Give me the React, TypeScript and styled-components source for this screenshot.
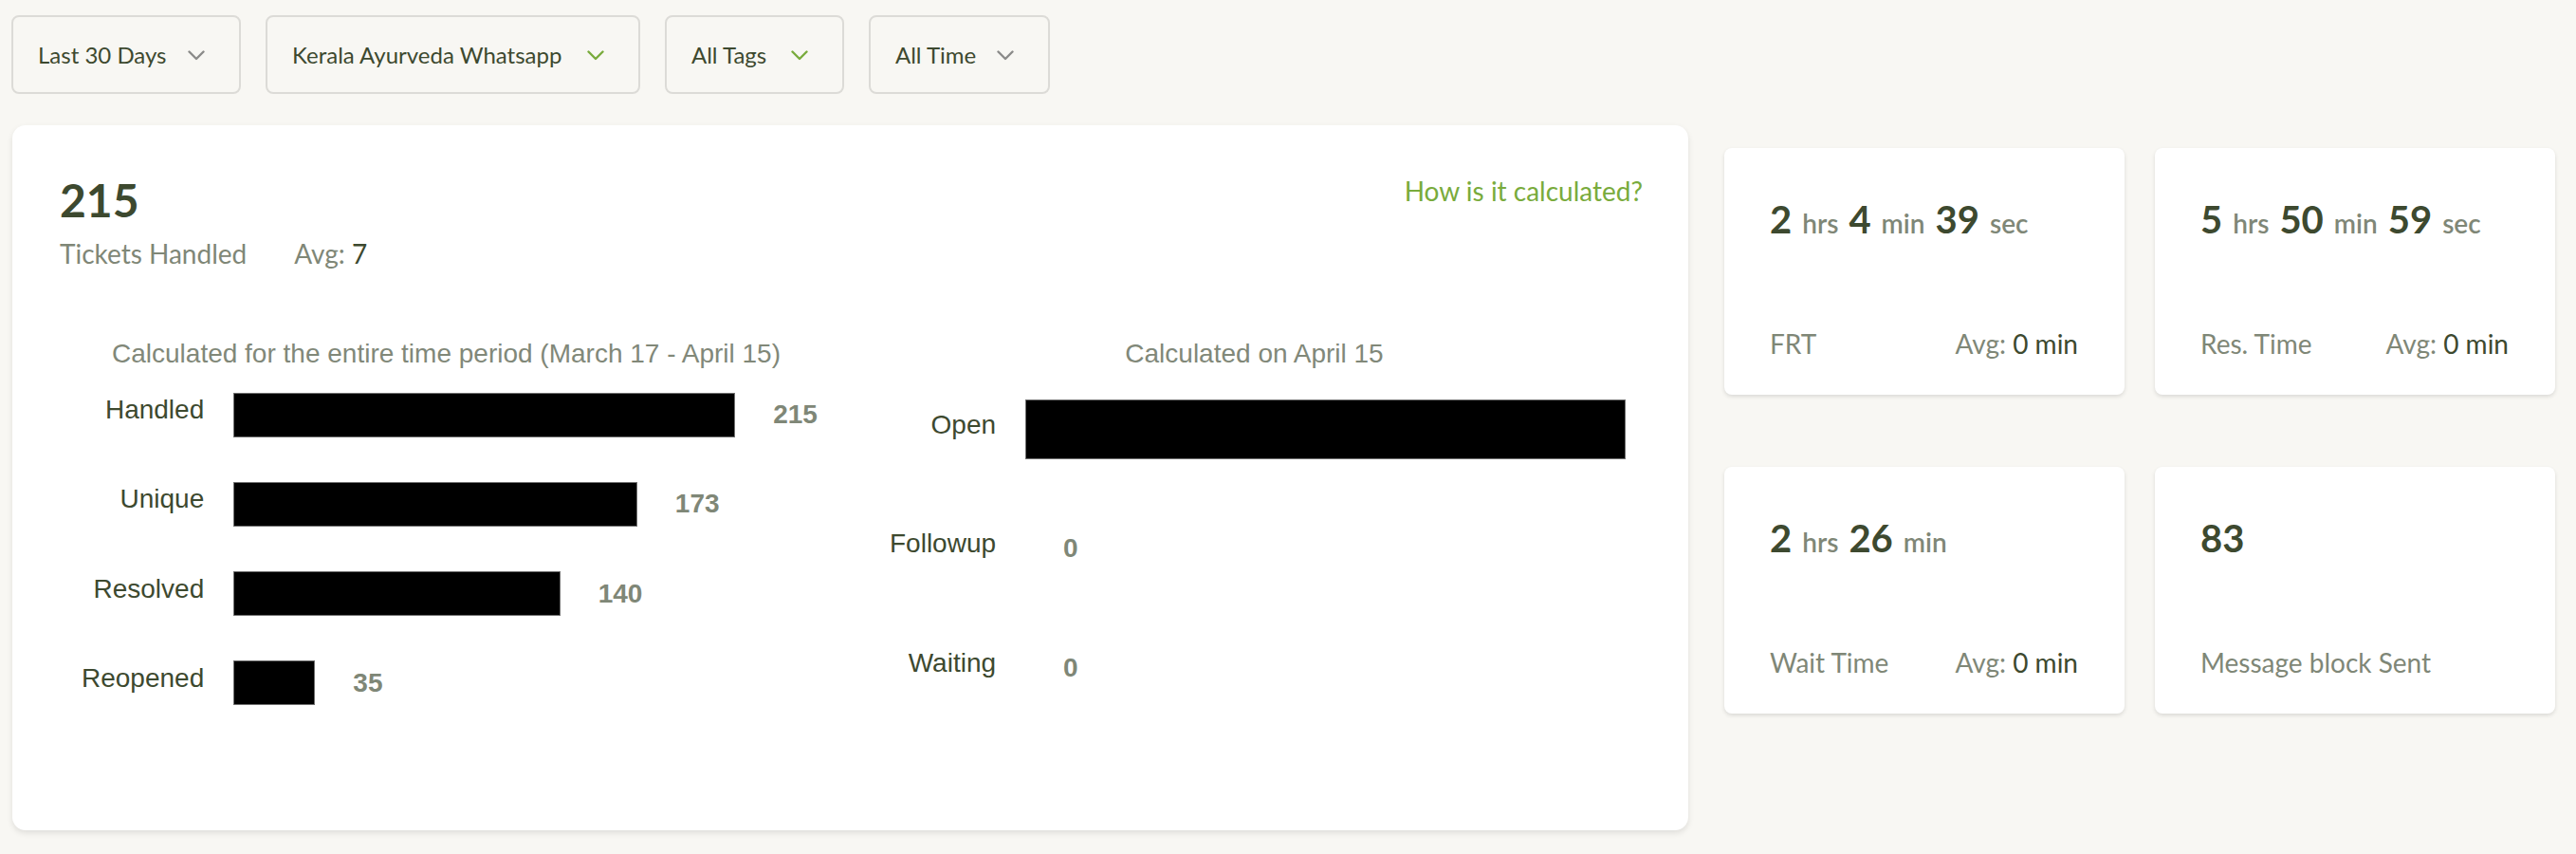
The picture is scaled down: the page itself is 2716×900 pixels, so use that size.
import React from "react";
import styled, { createGlobalStyle } from "styled-components";

const GlobalStyle = createGlobalStyle`
  body {
    margin: 0;
    background: #f8f7f3;
    font-family: Lato, "Open Sans", sans-serif;
  }
`;

const DARK = "#3d492f";
const MUTED = "#7f8777";
const GREEN = "#79ab3c";

type Filter = { label: string; width: number; accent?: boolean };

const filters: Filter[] = [
  { label: "Last 30 Days", width: 242 },
  { label: "Kerala Ayurveda Whatsapp", width: 395, accent: true },
  { label: "All Tags", width: 189, accent: true },
  { label: "All Time", width: 191 },
];

type Bar = { label: string; value: number };

const periodBars: Bar[] = [
  { label: "Handled", value: 215 },
  { label: "Unique", value: 173 },
  { label: "Resolved", value: 140 },
  { label: "Reopened", value: 35 },
];

const todayBars: Bar[] = [
  { label: "Open", value: 182 },
  { label: "Followup", value: 0 },
  { label: "Waiting", value: 0 },
];

type Part = { n: string; unit?: string };

type Stat = { parts: Part[]; label: string; avg?: string };

const stats: Stat[] = [
  {
    parts: [
      { n: "2", unit: "hrs" },
      { n: "4", unit: "min" },
      { n: "39", unit: "sec" },
    ],
    label: "FRT",
    avg: "0 min",
  },
  {
    parts: [
      { n: "5", unit: "hrs" },
      { n: "50", unit: "min" },
      { n: "59", unit: "sec" },
    ],
    label: "Res. Time",
    avg: "0 min",
  },
  {
    parts: [
      { n: "2", unit: "hrs" },
      { n: "26", unit: "min" },
    ],
    label: "Wait Time",
    avg: "0 min",
  },
  { parts: [{ n: "83" }], label: "Message block Sent" },
];

function Chevron({ accent }: { accent?: boolean }) {
  return (
    <svg width="18" height="11" viewBox="0 0 18 11">
      <polyline
        points="1.5,1.5 9,9 16.5,1.5"
        fill="none"
        stroke={accent ? GREEN : "#8b8b89"}
        strokeWidth="2.4"
        strokeLinecap="round"
        strokeLinejoin="round"
      />
    </svg>
  );
}

function BarChart({ title, bars, max }: { title: string; bars: Bar[]; max: number }) {
  return (
    <Chart>
      <ChartTitle>{title}</ChartTitle>
      <Plot $rows={bars.length}>
        {bars.map((b) => {
          const ratio = b.value / max;
          return (
            <React.Fragment key={b.label}>
              <BarLabel>{b.label}</BarLabel>
              <Track>
                {b.value > 0 && <BarFill style={{ width: `${ratio * 100}%` }} />}
                {/* label gets dropped when it would run past the plot, like the canvas clip */}
                {ratio < 0.9 && <BarValue>{b.value}</BarValue>}
              </Track>
            </React.Fragment>
          );
        })}
      </Plot>
    </Chart>
  );
}

export default function App() {
  return (
    <Page>
      <GlobalStyle />
      <FilterBar>
        {filters.map((f) => (
          <FilterButton key={f.label} $width={f.width}>
            <span>{f.label}</span>
            <Chevron accent={f.accent} />
          </FilterButton>
        ))}
      </FilterBar>

      <Content>
        <MainCard>
          <CardHeader>
            <div>
              <BigNumber>215</BigNumber>
              <SubLine>
                <span>Tickets Handled</span>
                <span>
                  Avg: <Strong>7</Strong>
                </span>
              </SubLine>
            </div>
            <HelpLink>How is it calculated?</HelpLink>
          </CardHeader>
          <ChartRow>
            <BarChart
              title="Calculated for the entire time period (March 17 - April 15)"
              bars={periodBars}
              max={251.5}
            />
            <BarChart title="Calculated on April 15" bars={todayBars} max={183} />
          </ChartRow>
        </MainCard>

        <StatGrid>
          {stats.map((s) => (
            <StatCard key={s.label}>
              <StatValue>
                {s.parts.map((p, i) => (
                  <React.Fragment key={i}>
                    <span>{p.n}</span>
                    {p.unit && <Unit>{p.unit}</Unit>}
                  </React.Fragment>
                ))}
              </StatValue>
              <StatFooter>
                <span>{s.label}</span>
                {s.avg && (
                  <span>
                    Avg: <Strong>{s.avg}</Strong>
                  </span>
                )}
              </StatFooter>
            </StatCard>
          ))}
        </StatGrid>
      </Content>
    </Page>
  );
}

const Page = styled.div`
  box-sizing: border-box;
  width: 2716px;
  height: 900px;
  padding: 16px 23px 0 12px;
`;

const FilterBar = styled.div`
  display: flex;
  gap: 26px;
`;

const FilterButton = styled.div<{ $width: number }>`
  box-sizing: border-box;
  width: ${(p) => p.$width}px;
  height: 83px;
  display: flex;
  align-items: center;
  justify-content: space-between;
  padding: 0 36px 0 26px;
  border: 2px solid #dcdbd7;
  border-radius: 8px;
  font-size: 24px;
  color: ${DARK};
  white-space: nowrap;

  svg {
    flex: none;
    margin-top: 2px;
  }
`;

const Content = styled.div`
  display: flex;
  align-items: flex-start;
  gap: 38px;
  margin-top: 33px;
  margin-left: 1px;
`;

const MainCard = styled.div`
  box-sizing: border-box;
  width: 1767px;
  height: 743px;
  padding-top: 50px;
  background: #fff;
  border-radius: 14px;
  box-shadow: 0 3px 6px rgba(0, 0, 0, 0.1);
`;

const CardHeader = styled.div`
  display: flex;
  justify-content: space-between;
  align-items: flex-start;
  padding: 0 48px 0 50px;
`;

const BigNumber = styled.div`
  font-size: 48px;
  line-height: 58px;
  font-weight: 700;
  color: ${DARK};
`;

const SubLine = styled.div`
  display: flex;
  gap: 50px;
  margin-top: 10px;
  font-size: 28px;
  line-height: 34px;
  color: ${MUTED};
`;

const Strong = styled.span`
  color: ${DARK};
`;

const HelpLink = styled.a`
  margin-top: 2px;
  font-size: 28px;
  line-height: 34px;
  color: ${GREEN};
  cursor: pointer;
`;

const ChartRow = styled.div`
  display: flex;
  gap: 63px;
  padding: 0 63px;
  margin-top: 72px;
`;

const Chart = styled.div`
  width: 790px;
  font-family: "Liberation Sans", Arial, sans-serif;
`;

const ChartTitle = styled.div`
  text-align: center;
  font-size: 28px;
  line-height: 34px;
  color: #818879;
`;

const Plot = styled.div<{ $rows: number }>`
  height: 377px;
  display: grid;
  grid-template-columns: auto 1fr;
  grid-template-rows: repeat(${(p) => p.$rows}, 1fr);
  column-gap: 31px;
  padding-left: 10px;
`;

const BarLabel = styled.div`
  align-self: center;
  text-align: right;
  padding-bottom: 10px;
  font-size: 28px;
  color: ${DARK};
`;

const Track = styled.div`
  display: flex;
  align-items: center;
`;

const BarFill = styled.div`
  box-sizing: border-box;
  flex: none;
  height: 50%;
  background: #000;
  border: 1px solid #6f6f6f;
`;

const BarValue = styled.span`
  flex: none;
  margin-left: 40px;
  font-size: 28px;
  font-weight: 700;
  color: ${MUTED};
`;

const StatGrid = styled.div`
  display: grid;
  grid-template-columns: repeat(2, 422px);
  grid-auto-rows: 260px;
  column-gap: 32px;
  row-gap: 76px;
  margin-top: 24px;
`;

const StatCard = styled.div`
  box-sizing: border-box;
  display: flex;
  flex-direction: column;
  justify-content: space-between;
  padding: 51px 49px 37px 48px;
  background: #fff;
  border-radius: 8px;
  box-shadow: 0 2px 4px rgba(0, 0, 0, 0.12);
`;

const StatValue = styled.div`
  display: flex;
  align-items: baseline;
  font-size: 40px;
  line-height: 48px;
  font-weight: 700;
  color: ${DARK};
`;

const Unit = styled.span`
  margin: 0 11px;
  font-size: 28px;
  font-weight: 600;
  color: ${MUTED};
`;

const StatFooter = styled.div`
  display: flex;
  justify-content: space-between;
  font-size: 28px;
  line-height: 34px;
  color: ${MUTED};
`;
